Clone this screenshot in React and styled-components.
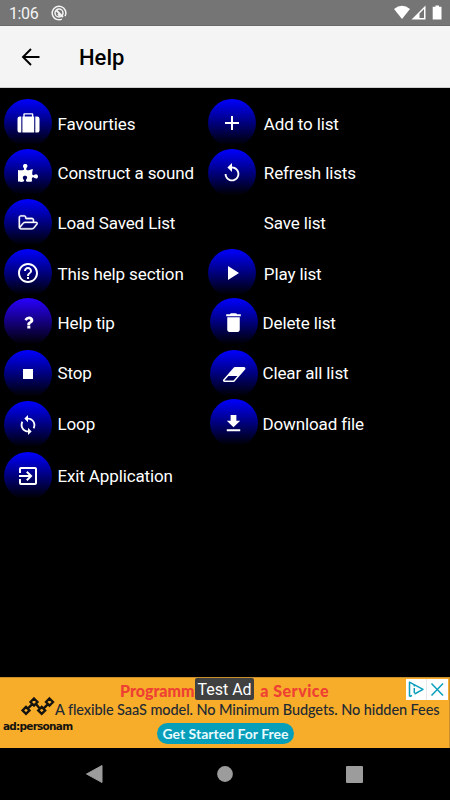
import React from "react";
import styled, { createGlobalStyle } from "styled-components";
import {
  MdAdd, MdReplay, MdHelpOutline, MdPlayArrow, MdStop, MdDelete,
  MdLoop, MdExitToApp, MdFileDownload,
} from "react-icons/md";
import { FaPuzzlePiece } from "react-icons/fa";

const Global = createGlobalStyle`
  * { box-sizing: border-box; }
  body { margin: 0; background: #000; font-family: Roboto, "Noto Sans", sans-serif; }
`;

const Screen = styled.main`
  width: 450px;
  height: 800px;
  display: flex;
  flex-direction: column;
  overflow: hidden;
  background: #000;
  color: #fff;
`;

const StatusBar = styled.div`
  height: 26px;
  flex: none;
  display: flex;
  align-items: center;
  padding: 1px 8px 0 9px;
  background: #757575;
  border-bottom: 1px solid #696969;
  font-size: 16px;
  line-height: 24px;
`;

const Clock = styled.span`
  width: 41.5px;
  padding-top: 2px;
  letter-spacing: -0.4px;
  color: #f4f4f4;
`;

const StatusIcons = styled.div`
  margin-left: auto;
  display: flex;
`;

const Header = styled.header`
  height: 62px;
  flex: none;
  display: flex;
  align-items: center;
  gap: 38px;
  padding-left: 21px;
  background: #f4f4f4;
  border-bottom: 1px solid #cfcfcf;
  color: #000;
`;

const Title = styled.h1`
  margin: 2px 0 0;
  font-size: 22px;
  font-weight: 500;
  line-height: 28px;
`;

const Content = styled.section`
  flex: 1;
  display: flex;
  padding: 11px 0 0 4px;
`;

const Column = styled.div`
  width: ${(p) => p.$width}px;
  flex: none;
  display: flex;
  flex-direction: column;
`;

const Item = styled.div`
  height: 48px;
  flex: none;
  display: flex;
  align-items: center;
  gap: ${(p) => p.$gap ?? 5.5}px;
  margin-top: ${(p) => p.$top}px;
  margin-left: ${(p) => p.$indent ?? 0}px;
`;

const Disc = styled.div`
  width: 48px;
  height: 48px;
  flex: none;
  display: flex;
  align-items: center;
  justify-content: center;
  border-radius: 50%;
  background: ${(p) =>
    p.$hidden ? "none" : `linear-gradient(${p.$tint || "#0000ff"}, #000 97%)`};
  svg { display: block; }
`;

const Label = styled.span`
  font-size: 17px;
  line-height: 24px;
  letter-spacing: -0.13px;
  white-space: nowrap;
  padding-top: ${(p) => Math.max(0, p.$drop ?? 1)}px;
  padding-bottom: ${(p) => Math.max(0, -(p.$drop ?? 1))}px;
`;

const Ad = styled.aside`
  height: 71px;
  flex: none;
  position: relative;
  display: flex;
  background: #f7ac2a;
  border-top: 1px solid #c98f2c;
  border-right: 1px solid #c98f2c;
`;

const Brand = styled.div`
  width: 55px;
  flex: none;
  padding: 18px 0 0 3px;
  color: #15130f;
  svg { display: block; margin-left: 18px; }
`;

const BrandName = styled.div`
  font: 700 10.5px/12px "DejaVu Sans", sans-serif;
  letter-spacing: -0.75px;
  white-space: nowrap;
  margin-top: 4px;
`;

const Copy = styled.div`
  display: flex;
  flex-direction: column;
  font-family: Lato, sans-serif;
  white-space: nowrap;
`;

const Headline = styled.div`
  display: flex;
  justify-content: space-between;
  width: 209px;
  margin: 4px 0 0 65px;
  font-size: 16px;
  font-weight: 900;
  line-height: 18px;
  color: #ee4033;
`;

const HeadlineEnd = styled.span`
  letter-spacing: 0.5px;
`;

const Pitch = styled.div`
  margin-top: 1px;
  font-size: 14.5px;
  line-height: 18px;
  font-weight: 500;
  letter-spacing: -0.08px;
  color: #222a32;
`;

const Cta = styled.button`
  width: 137px;
  height: 21px;
  margin: 4px 0 0 102px;
  padding: 0;
  border: 0;
  border-radius: 11px;
  background: #079eb9;
  color: #e9fbff;
  font: 700 14px/20px Lato, sans-serif;
`;

const TestBadge = styled.div`
  position: absolute;
  left: 195px;
  top: 0;
  width: 59px;
  height: 22px;
  border-radius: 2px;
  background: #404040;
  font-size: 16px;
  line-height: 24px;
  text-align: center;
  white-space: nowrap;
`;

const AdControls = styled.div`
  position: absolute;
  right: 1px;
  top: 1px;
  width: 42px;
  height: 21px;
  background: #fff;
  svg { display: block; }
`;

const NavBar = styled.nav`
  height: 52px;
  flex: none;
  display: flex;
  justify-content: space-between;
  align-items: center;
  padding: 0 87px 0 86px;
  background: #000;
`;

const Glyph = ({ w, h, box, d, bold = 0 }) => (
  <svg width={w} height={h} viewBox={box} fill="currentColor" stroke="currentColor" strokeWidth={bold}>
    <path d={d} />
  </svg>
);

const Suitcase = () => (
  <Glyph w={23} h={20} box="0 0 23 20" d="M6.300 3.500V1.200Q6.300.2 7.300.2H15.300Q16.300.2 16.300 1.200V3.500H17.200V19.600H5.400V3.500ZM7.700 3.500H14.900V1.600H7.700ZM4.300 3.500V19.600H2.700Q.5 19.600.5 17.400V5.700Q.5 3.500 2.700 3.500ZM18.300 3.500H20.200Q22.500 3.500 22.500 5.700V17.400Q22.500 19.600 20.200 19.600H18.300Z" />
);
const FolderOpen = () => (
  <Glyph w={20} h={18} box="0 0 1984 1792" bold={36} d="M1845 931q0-35-53-35h-1088q-40 0-85.5 21.5t-71.5 52.5l-294 363q-18 24-18 40 0 35 53 35h1088q40 0 86-22t71-53l294-363q18-22 18-39zm-1141-163h768v-160q0-40-28-68t-68-28h-576q-40 0-68-28t-28-68v-64q0-40-28-68t-68-28h-320q-40 0-68 28t-28 68v853l256-315q44-53 116-87.5t140-34.5zm1269 163q0 62-46 120l-295 363q-43 53-116 87.5t-140 34.5h-1088q-92 0-158-66t-66-158v-960q0-92 66-158t158-66h320q92 0 158 66t66 158v32h544q92 0 158 66t66 158v160h192q54 0 99 24.5t67 70.5q15 32 15 68z" />
);
const Question = () => (
  <Glyph w={17} h={17} box="0 0 1792 1792" d="M1088 1256v240q0 16-12 28t-28 12h-240q-16 0-28-12t-12-28v-240q0-16 12-28t28-12h240q16 0 28 12t12 28zm316-600q0 54-15.5 101t-35 76.5-55 59.5-57.5 43.5-61 35.5q-41 23-68.5 65t-27.5 67q0 17-12 32.5t-28 15.5h-240q-15 0-25.5-18.5t-10.5-37.5v-45q0-83 65-156.5t143-108.5q59-27 84-56t25-76q0-42-46.5-74t-107.5-32q-65 0-108 29-35 25-107 115-13 16-31 16-12 0-25-8l-164-125q-13-10-15.5-25t5.5-28q160-266 464-266 80 0 161 31t146 83 106 127.5 41 158.5z" />
);
const Eraser = () => (
  <Glyph w={24} h={21} box="-16 0 2048 1792" d="M960 1408l336-384h-768l-336 384h768zm1013-1077q15 34 9.5 71.5t-30.5 65.5l-896 1024q-38 44-96 44h-768q-38 0-69.5-20.5t-47.5-54.5q-15-34-9.5-71.5t30.5-65.5l896-1024q38-44 96-44h768q38 0 69.5 20.5t47.5 54.5z" />
);

const left = [
  { text: "Favourties", icon: <Suitcase />, top: 0 },
  { text: "Construct a sound", icon: <FaPuzzlePiece size={20} />, top: 1.5 },
  { text: "Load Saved List", icon: <FolderOpen />, top: 2 },
  { text: "This help section", icon: <MdHelpOutline size={24} />, top: 2.5 },
  { text: "Help tip", icon: <Question />, top: 1, tint: "#2800ff" },
  { text: "Stop", icon: <MdStop size={20} />, top: 4, drop: -2 },
  { text: "Loop", icon: <MdLoop size={22} />, top: 3, drop: -2 },
  { text: "Exit Application", icon: <MdExitToApp size={24} />, top: 2.5 },
];

const right = [
  { text: "Add to list", icon: <MdAdd size={24} />, top: 0, gap: 7.5, indent: 0.3 },
  { text: "Refresh lists", icon: <MdReplay size={22} />, top: 1.5, gap: 7.5, indent: 0.3 },
  { text: "Save list", hidden: true, top: 2, gap: 7.5, indent: 0.3 },
  { text: "Play list", icon: <MdPlayArrow size={24} />, top: 2.5, gap: 7.5, indent: 0.3 },
  { text: "Delete list", icon: <MdDelete size={25} />, top: 1, indent: 1.5, gap: 5 },
  { text: "Clear all list", icon: <Eraser />, top: 4, indent: 1.5, gap: 5, drop: -2 },
  { text: "Download file", icon: <MdFileDownload size={23} />, top: 1, indent: 1.5, gap: 5 },
];

const renderItem = (it) => (
  <Item key={it.text} $top={it.top} $gap={it.gap} $indent={it.indent}>
    <Disc $tint={it.tint} $hidden={it.hidden}>{it.icon}</Disc>
    <Label $drop={it.drop}>{it.text}</Label>
  </Item>
);

export default function App() {
  return (
    <Screen>
      <Global />
      <StatusBar>
        <Clock>1:06</Clock>
        <svg width="16" height="16" viewBox="0 0 16 16" fill="none" stroke="#f4f4f4">
          <circle cx="8" cy="8" r="6.8" strokeWidth="1.5" strokeDasharray="38 4.7" transform="rotate(65 8 8)" />
          <circle cx="8" cy="8" r="4" strokeWidth="1.5" />
          <path d="M5 5l7 7M7 9l2 2" strokeWidth="1.8" />
        </svg>
        <StatusIcons>
          <svg width="48" height="16" viewBox="0 0 48 16" fill="#fff">
            <path d="M0 4Q8-2.400 16 4L8 14Z" />
            <path fillRule="evenodd" d="M17.500 14.500 31.500 0.500v14ZM25.500 8.500v4.500H30V4Z" />
            <path d="M41.500 0.500h3.500v1.300H47.500v12.700h-8.800V1.800H41.500Z" />
          </svg>
        </StatusIcons>
      </StatusBar>
      <Header>
        <svg width="20" height="20" viewBox="0 0 20 20" fill="none" stroke="#000" strokeWidth="1.9">
          <path d="M18.500 10H2.500M10 2 2 10l8 8" />
        </svg>
        <Title>Help</Title>
      </Header>
      <Content>
        <Column $width={204}>{left.map(renderItem)}</Column>
        <Column $width={240}>{right.map(renderItem)}</Column>
      </Content>
      <Ad>
        <Brand>
          <svg width="34" height="20" viewBox="0 0 34 20" fill="none" stroke="#15130f" strokeWidth="2.3">
            <path d="M5 10.900l3.500 3.500L5 17.900 1.500 14.400ZM13 2.500l3.500 3.500L13 9.500 9.500 6ZM20.700 10.900l3.500 3.500-3.500 3.500-3.500-3.500ZM28.500 2.500l3.500 3.500-3.500 3.500L25 6ZM7 12.400l4-4M15 8l3.700 4.400M22.700 12.400l4-4" />
          </svg>
          <BrandName>ad:personam</BrandName>
        </Brand>
        <Copy>
          <Headline><span>Programm</span><HeadlineEnd>a Service</HeadlineEnd></Headline>
          <Pitch>A flexible SaaS model. No Minimum Budgets. No hidden Fees</Pitch>
          <Cta>Get Started For Free</Cta>
        </Copy>
        <TestBadge>Test Ad</TestBadge>
        <AdControls>
          <svg width="42" height="21" viewBox="0 0 42 21" fill="none" stroke="#0aa0bd" strokeWidth="1.500">
            <path d="M3.500 17.500V3.200L17 10.300 8.500 15M6 16.500l-2.500 1" strokeLinejoin="round" />
            <path d="M8.300 9v5M8.300 6v1.600M25.500 4.500l11.500 12M37 4.500l-11.500 12" />
            <path d="M20.500 0v21" stroke="#e8e8e8" strokeWidth="1" />
          </svg>
        </AdControls>
      </Ad>
      <NavBar>
        <svg width="17" height="18" viewBox="0 0 17 18"><path d="M.5 9 16 .5v17Z" fill="#9c9c9c" stroke="#9c9c9c" strokeLinejoin="round" /></svg>
        <svg width="16" height="16" viewBox="0 0 16 16"><circle cx="8" cy="8" r="7.900" fill="#9c9c9c" /></svg>
        <svg width="17" height="17" viewBox="0 0 17 17"><rect width="17" height="17" rx="1" fill="#9c9c9c" /></svg>
      </NavBar>
    </Screen>
  );
}
